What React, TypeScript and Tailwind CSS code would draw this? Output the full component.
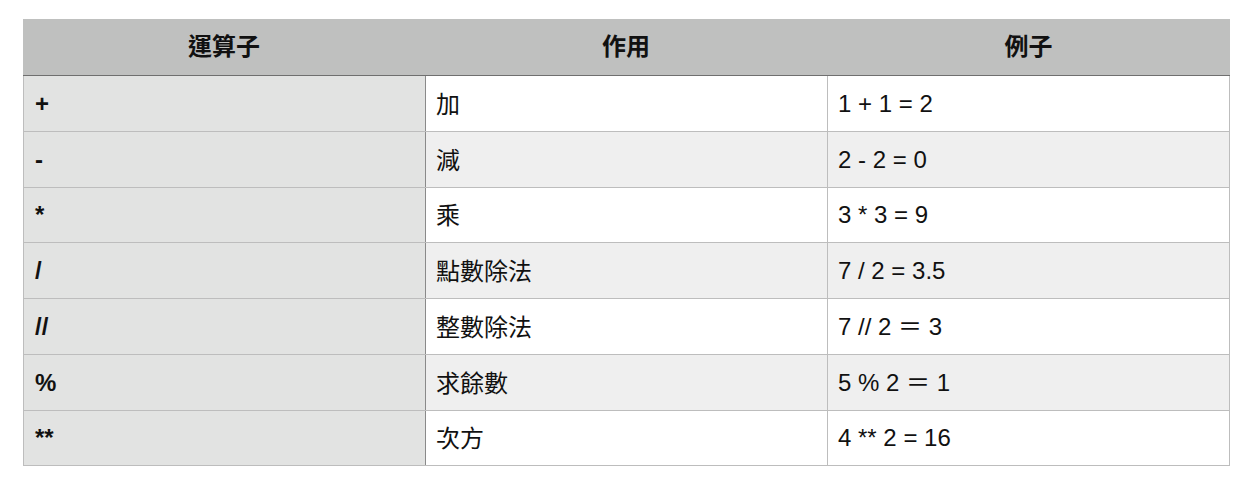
const FONT = "font-['Liberation_Sans','Noto_Sans_CJK_TC',sans-serif]";

type Row = { op: string; desc: string; example: string; h: string };

const ROWS: Row[] = [
  { op: "+", desc: "加", example: "1 + 1 = 2", h: "h-[56px]" },
  { op: "-", desc: "減", example: "2 - 2 = 0", h: "h-[56px]" },
  { op: "*", desc: "乘", example: "3 * 3 = 9", h: "h-[55px]" },
  { op: "/", desc: "點數除法", example: "7 / 2 = 3.5", h: "h-[56px]" },
  { op: "//", desc: "整數除法", example: "7 // 2 ＝ 3", h: "h-[56px]" },
  { op: "%", desc: "求餘數", example: "5 % 2 ＝ 1", h: "h-[56px]" },
  { op: "**", desc: "次方", example: "4 ** 2 = 16", h: "h-[55px]" },
];

export default function App() {
  return (
    <div className={`min-h-[488px] w-[1248px] bg-white pt-[19px] pl-[23px] text-[#111] ${FONT}`}>
      <div className="w-[1207px]">
        <div className="flex h-[57px] border-b border-[#6f6f6f] bg-[#bfc0bf] text-[24px] font-bold">
          <div className="flex w-[402px] items-center justify-center">運算子</div>
          <div className="flex w-[402px] items-center justify-center">作用</div>
          <div className="flex w-[403px] items-center justify-center">例子</div>
        </div>
        {ROWS.map((row, i) => {
          const stripe = i % 2 === 1 ? "bg-[#efefef]" : "bg-white";
          return (
            <div
              key={row.op}
              className={`flex ${row.h} border-x border-b border-[#bdbdbd] text-[24px] leading-none`}
            >
              <div className="flex w-[402px] items-center border-r border-[#8a8a8a] bg-[#e2e3e2] pl-[11px] font-bold">
                {row.op}
              </div>
              <div className={`flex w-[402px] items-center border-r border-[#bdbdbd] pl-[10px] pt-[2px] ${stripe}`}>
                {row.desc}
              </div>
              <div className={`flex w-[401px] items-center pl-[10px] ${stripe}`}>{row.example}</div>
            </div>
          );
        })}
      </div>
    </div>
  );
}
